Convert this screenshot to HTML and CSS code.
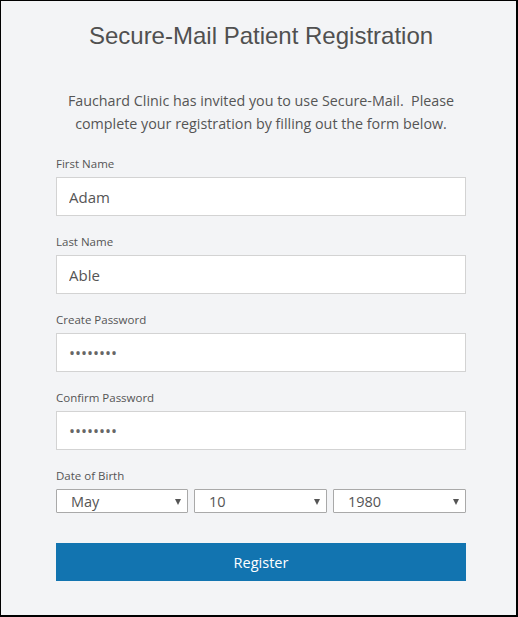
FILE: index.html
```html
<!DOCTYPE html>
<html lang="en">
<head>
<meta charset="utf-8">
<title>Secure-Mail Patient Registration</title>
<link rel="stylesheet" href="styles.css">
</head>
<body>
<div class="page">
  <h1 class="title">Secure-Mail Patient Registration</h1>
  <p class="intro">Fauchard Clinic has invited you to use Secure-Mail.&nbsp; Please<br>complete your registration by filling out the form below.</p>
  <form class="form">
    <div class="field">
      <label class="label" for="fn">First Name</label>
      <input class="input" id="fn" type="text" value="Adam">
    </div>
    <div class="field">
      <label class="label" for="ln">Last Name</label>
      <input class="input" id="ln" type="text" value="Able">
    </div>
    <div class="field">
      <span class="label">Create Password</span>
      <div class="input dots">••••••••</div>
    </div>
    <div class="field">
      <span class="label">Confirm Password</span>
      <div class="input dots">••••••••</div>
    </div>
    <div class="field dob">
      <span class="label">Date of Birth</span>
      <div class="selects">
        <div class="select"><span class="select-text">May</span><span class="arrow"></span></div>
        <div class="select"><span class="select-text">10</span><span class="arrow"></span></div>
        <div class="select"><span class="select-text">1980</span><span class="arrow"></span></div>
      </div>
    </div>
    <button class="button" type="button">Register</button>
  </form>
</div>
</body>
</html>
```
FILE: styles.css
```css
* { box-sizing: border-box; }
html, body { margin: 0; padding: 0; }
body {
  width: 518px;
  height: 617px;
  background: #f3f4f6;
}
.page {
  width: 518px;
  height: 617px;
  border-style: solid;
  border-color: #000;
  border-width: 1px 2px 2px 1px;
  background: #f3f4f6;
  padding: 21px 50px 0 55px;
  font-family: "Open Sans", "Liberation Sans", sans-serif;
  color: #555;
}
.title {
  margin: 0;
  font-family: "Liberation Sans", Arial, sans-serif;
  font-weight: normal;
  font-size: 24px;
  line-height: 28px;
  color: #505050;
  text-align: center;
}
.intro {
  margin: 39px 0 0;
  font-size: 14.3px;
  line-height: 23px;
  text-align: center;
  color: #555;
}
.form {
  display: flex;
  flex-direction: column;
  margin-top: 21px;
}
.field {
  display: flex;
  flex-direction: column;
  gap: 5px;
  margin-bottom: 18px;
}
.label {
  font-size: 11.5px;
  line-height: 16px;
  color: #555;
}
.input {
  width: 410px;
  height: 39px;
  border: 1px solid #d3d3d3;
  background: #fff;
  padding: 0 0 0 12px;
  font-family: "Open Sans", sans-serif;
  font-size: 15px;
  color: #555;
  outline: none;
  margin: 0;
  display: flex;
  align-items: center;
}
.dots {
  font-size: 16px;
  letter-spacing: 0;
  color: #666;
  padding-left: 12px;
}
.dob { margin-bottom: 30px; }
.selects {
  display: grid;
  grid-template-columns: 132px 133px 133px;
  gap: 6px;
}
.select {
  position: relative;
  height: 24px;
  border: 1px solid #a9a9a9;
  border-radius: 1px;
  background: #fff;
  display: flex;
  align-items: center;
  padding-left: 14px;
  font-size: 14.5px;
  color: #555;
}
.arrow {
  position: absolute;
  right: 6px;
  top: 9px;
  width: 0;
  height: 0;
  border-left: 3.5px solid transparent;
  border-right: 3.5px solid transparent;
  border-top: 6px solid #555;
}
.button {
  width: 410px;
  height: 38px;
  border: none;
  background: #1274b0;
  color: #fff;
  font-family: "Open Sans", sans-serif;
  font-size: 14.5px;
  padding: 0;
  margin: 0;
  cursor: pointer;
}
```
